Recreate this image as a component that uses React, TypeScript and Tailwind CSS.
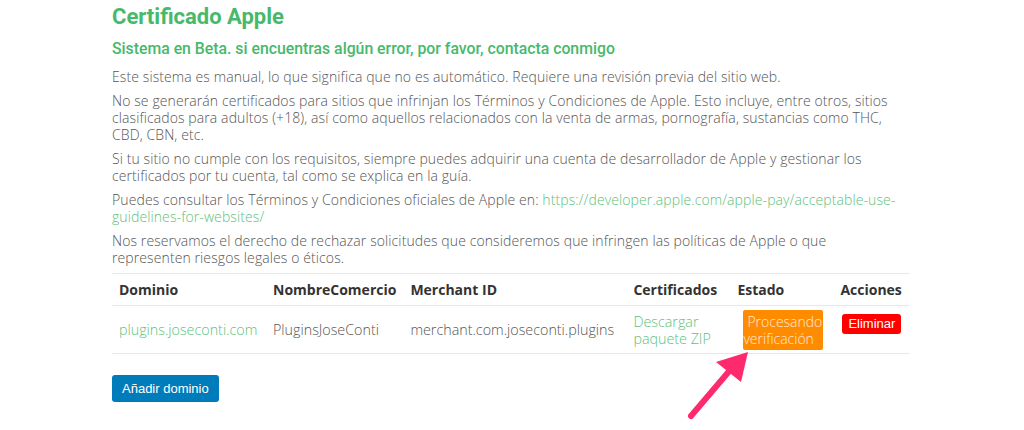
import React from 'react';

const body = "font-['Open_Sans',sans-serif]";

function PinkArrow() {
  return (
    <svg className="absolute left-0 top-0 pointer-events-none" width="1024" height="430" viewBox="0 0 1024 430">
      <path d="M691 416 L731 369" stroke="#ff2a6d" strokeWidth="6" strokeLinecap="round" />
      <polygon points="748,352 741,382 716,362" fill="#ff2a6d" />
    </svg>
  );
}

export default function App() {
  return (
    <div className="relative w-[1024px] h-[430px] bg-white overflow-hidden">
      <div className="px-[112px] pt-[3px]">
        {/* Header */}
        <h1 className="font-['Roboto',sans-serif] font-bold text-[22px] leading-[28px] text-[#46b96b]">Certificado Apple</h1>
        <h2 className="mt-[6px] font-['Roboto',sans-serif] font-medium text-[15.8px] leading-[24px] text-[#46b96b]">
          Sistema en Beta. si encuentras algún error, por favor, contacta conmigo
        </h2>

        {/* Intro paragraphs */}
        <div className={`mt-[7px] w-[794px] ${body} font-light text-[14px] tracking-[0.1px] leading-[17px] text-[#555] flex flex-col gap-[7px]`}>
          <p>Este sistema es manual, lo que significa que no es automático. Requiere una revisión previa del sitio web.</p>
          <p>
            No se generarán certificados para sitios que infrinjan los Términos y Condiciones de Apple. Esto incluye, entre otros, sitios clasificados para adultos (+18), así como aquellos relacionados con la venta de armas, pornografía, sustancias como THC, CBD, CBN, etc.
          </p>
          <p>
            Si tu sitio no cumple con los requisitos, siempre puedes adquirir una cuenta de desarrollador de Apple y gestionar los certificados por tu cuenta, tal como se explica en la guía.
          </p>
          <p>
            Puedes consultar los Términos y Condiciones oficiales de Apple en:{' '}
            <a className="text-[#5cc27c]">https://developer.apple.com/apple-pay/acceptable-use-guidelines-for-websites/</a>
          </p>
          <p>
            Nos reservamos el derecho de rechazar solicitudes que consideremos que infringen las políticas de Apple o que representen riesgos legales o éticos.
          </p>
        </div>

        {/* Domains table */}
        <table className={`mt-[7px] w-[798px] border-collapse ${body} text-[14px]`}>
          <thead>
            <tr className="border-t border-b border-[#e8e8e8] h-[32px] text-left text-[#333]">
              <th className="w-[154px] px-[7px] font-bold">Dominio</th>
              <th className="w-[136px] px-[7px] font-bold">NombreComercio</th>
              <th className="w-[223px] px-[7px] font-bold">Merchant ID</th>
              <th className="w-[104px] px-[7px] font-bold">Certificados</th>
              <th className="w-[103px] px-[7px] font-bold">Estado</th>
              <th className="px-[7px] font-bold">Acciones</th>
            </tr>
          </thead>
          <tbody>
            <tr className="border-b border-[#e8e8e8] h-[48px] font-light text-[#555] leading-[17px] text-[14.3px]">
              <td className="px-[7px] text-[#5cc27c]">plugins.joseconti.com</td>
              <td className="px-[7px]">PluginsJoseConti</td>
              <td className="px-[7px] whitespace-nowrap">merchant.com.joseconti.plugins</td>
              <td className="px-[7px] text-[#5cc27c]">Descargar paquete ZIP</td>
              <td className="px-[7px]">
                <div className="w-[80px] ml-[6px] bg-[#ff8c00] text-[#ffe9d2] py-[3px] rounded-[2px] whitespace-nowrap text-[14px]">
                  <div className="pl-[4px]">Procesando</div>
                  <div>verificación</div>
                </div>
              </td>
              <td className="px-[7px] align-top pt-[8px]">
                <button className="ml-[2px] bg-[#ff0000] text-white font-['Liberation_Sans',sans-serif] text-[13px] leading-[16px] px-[6px] py-[2px] rounded-[3px]">
                  Eliminar
                </button>
              </td>
            </tr>
          </tbody>
        </table>

        <button className="mt-[21px] bg-[#007cba] text-white font-['Liberation_Sans',sans-serif] text-[13px] leading-[17px] px-[10px] py-[5px] rounded-[3px]">
          Añadir dominio
        </button>
      </div>
      <PinkArrow />
    </div>
  );
}
